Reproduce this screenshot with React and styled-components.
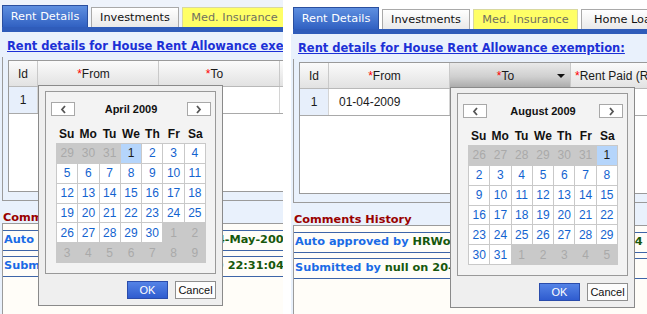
import React from "react";
import styled, { createGlobalStyle, css } from "styled-components";

const GlobalStyle = createGlobalStyle`
  html, body { margin: 0; padding: 0; background: #ffffff; overflow: hidden; }
  body { width: 647px; height: 314px; }
  * { box-sizing: border-box; }
`;

const Screen = styled.div`
  display: flex;
  gap: 8px;
  width: 647px;
  height: 314px;
  overflow: hidden;
  background: #ffffff;
`;

const Panel = styled.div`
  flex-shrink: 0;
  width: ${(p) => p.$w}px;
  height: 314px;
  overflow: hidden;
  padding-top: ${(p) => p.$top}px;
  background: ${(p) => p.$topBg};
  display: flex;
  flex-direction: column;
`;

const TabBar = styled.div`
  display: flex;
  align-items: flex-end;
  gap: 3px;
  height: 22px;
  padding-left: 2px;
  flex-shrink: 0;
`;

const Tab = styled.div`
  flex-shrink: 0;
  width: ${(p) => p.$w}px;
  height: 20px;
  display: flex;
  align-items: center;
  justify-content: center;
  font: 11.3px "DejaVu Sans", Verdana, sans-serif;
  color: #111;
  border: 1px solid #a9a9a9;
  border-bottom: none;
  background: linear-gradient(#ffffff, #e9e9e9);
  white-space: nowrap;
  ${(p) =>
    p.$kind === "active" &&
    css`
      height: 22px;
      color: #ffffff;
      border-color: #2a4f9f;
      background: linear-gradient(#5e8fe0, #3161c2);
    `}
  ${(p) =>
    p.$kind === "yellow" &&
    css`
      color: #707060;
      border-color: #d8d8a0;
      background: #ffff66;
    `}
`;

const Strip = styled.div`
  height: 5px;
  margin-left: 2px;
  background: #2f5cba;
  flex-shrink: 0;
`;

const Body = styled.div`
  flex: 1;
  display: flex;
  flex-direction: column;
  background: #e9f1fc;
  width: 480px;
`;

const Heading = styled.div`
  padding: 7px 0 0 7px;
  height: 22px;
  line-height: 16px;
  font: bold 11.5px "DejaVu Sans", Verdana, sans-serif;
  color: #1c30d6;
  text-decoration: underline;
  white-space: nowrap;
`;

const GridWrap = styled.div`
  margin: 3px 0 0 2px;
  padding: 3px 0 8px 5px;
  border-left: 1px solid #9b9b9b;
  border-bottom: 1px solid #9b9b9b;
`;

const Table = styled.div`
  width: 460px;
  height: 132px;
  border: 1px solid #9a9a9a;
  background: #ffffff;
  font: 11px "Liberation Sans", Arial, sans-serif;
  color: #1a1a1a;
`;

const Row = styled.div`
  display: grid;
  grid-template-columns: 29px 121px 121px 1fr;
  height: ${(p) => p.$h}px;
  border-bottom: 1px solid ${(p) => p.$line};
`;

const HeadCell = styled.div`
  position: relative;
  display: flex;
  align-items: center;
  justify-content: ${(p) => (p.$left ? "flex-start" : "center")};
  padding: ${(p) => (p.$left ? "0 0 0 4px" : `0 ${p.$pr || 0}px 0 0`)};
  border-right: 1px solid #c9c9c9;
  font-size: 12px;
  white-space: nowrap;
  background: linear-gradient(#fbfbfb, #e2e2e2);
  ${(p) =>
    p.$active &&
    css`
      background: linear-gradient(#e9e9e9 0%, #cfcfcf 55%, #a9a9a9 100%);
    `}
`;

const Star = styled.span`
  color: #ff0000;
`;

const DropArrow = styled.span`
  position: absolute;
  right: 5px;
  top: 11px;
  width: 0;
  height: 0;
  border-left: 4px solid transparent;
  border-right: 4px solid transparent;
  border-top: 4px solid #111;
`;

const Cell = styled.div`
  display: flex;
  align-items: center;
  justify-content: ${(p) => (p.$center ? "center" : "flex-start")};
  padding-left: ${(p) => (p.$center ? 0 : 10)}px;
  border-right: 1px solid #d4d4d4;
  background: ${(p) => (p.$tint ? "#e7effb" : "#ffffff")};
  font-size: 12px;
`;

const CommentsTitle = styled.div`
  padding: 10px 0 0 3px;
  height: 22px;
  line-height: 12px;
  font: bold 11.3px "DejaVu Sans", Verdana, sans-serif;
  color: #990000;
  white-space: nowrap;
`;

const CommentsBox = styled.div`
  flex: 1;
  margin-left: 2px;
  padding-top: 6px;
  border-left: 1px solid #9b9b9b;
  border-top: 1px solid #9b9b9b;
  background: #fffdf8;
`;

const Comment = styled.div`
  height: 21px;
  margin-bottom: 5px;
  padding-left: 1px;
  border-top: 1px solid #3e65a8;
  border-bottom: 1px solid #3e65a8;
  font: bold 11.3px "DejaVu Sans", Verdana, sans-serif;
  line-height: 18px;
  white-space: nowrap;
`;

const Label = styled.span`
  color: #1a6be6;
`;

const Value = styled.span`
  color: #17580c;
`;

/* ---------- calendar popup ---------- */

const Popup = styled.div`
  position: absolute;
  top: calc(100% - 1px);
  left: 0;
  z-index: 10;
  width: 185px;
  height: 221px;
  padding: 5px 6px 0 6px;
  border: 1px solid #8a8a8a;
  background: #efefef;
  font-family: "Liberation Sans", Arial, sans-serif;
  cursor: default;
`;

const CalBox = styled.div`
  height: 183px;
  border: 1px solid #999999;
  background: #f3f3f3;
  padding: 10px 4px 10px 5px;
`;

const NavRow = styled.div`
  display: flex;
  align-items: center;
  justify-content: space-between;
  height: 14px;
`;

const NavButton = styled.div`
  width: 24px;
  height: 14px;
  display: flex;
  align-items: center;
  justify-content: center;
  border: 1px solid #a8a8a8;
  background: #ffffff;
`;

const MonthTitle = styled.div`
  font-weight: bold;
  font-size: 11px;
  color: #111;
`;

const DayHeads = styled.div`
  display: grid;
  grid-template-columns: repeat(7, 1fr);
  width: 150px;
  height: 17px;
  margin: 9px 0 1px 5px;
  align-items: center;
  font-weight: bold;
  font-size: 12px;
  color: #111;
  text-align: center;
`;

const DayGrid = styled.div`
  display: grid;
  grid-template-columns: repeat(7, 1fr);
  grid-template-rows: repeat(6, 1fr);
  gap: 1px;
  padding: 1px;
  width: 150px;
  height: 120px;
  margin-left: 5px;
  background: #c9c9c9;
`;

const Day = styled.div`
  display: flex;
  align-items: center;
  justify-content: center;
  font-size: 12px;
  color: #1363cf;
  background: #ffffff;
  ${(p) =>
    p.$out &&
    css`
      color: #a9a9a9;
      background: #c9c9c9;
    `}
  ${(p) =>
    p.$sel &&
    css`
      color: #1a1a1a;
      background: #b5d5fb;
    `}
`;

const ButtonRow = styled.div`
  display: flex;
  justify-content: flex-end;
  gap: 7px;
  margin-top: 7px;
`;

const Button = styled.div`
  width: 41px;
  height: 18px;
  display: flex;
  align-items: center;
  justify-content: center;
  font-size: 11px;
  border: 1px solid #8f8f8f;
  background: #fdfdfd;
  color: #111;
  ${(p) =>
    p.$primary &&
    css`
      border-color: #2a4cab;
      background: linear-gradient(#5483e6, #2f5ccf);
      color: #ffffff;
    `}
`;

const Chevron = ({ dir }) => (
  <svg width="7" height="9" viewBox="0 0 7 9">
    <polyline
      points={dir === "left" ? "5,1 2,4.5 5,8" : "2,1 5,4.5 2,8"}
      fill="none"
      stroke="#555"
      strokeWidth="1.8"
    />
  </svg>
);

const MONTHS = [
  "January", "February", "March", "April", "May", "June",
  "July", "August", "September", "October", "November", "December",
];

function buildDays(year, month) {
  const first = new Date(year, month, 1).getDay();
  const dim = new Date(year, month + 1, 0).getDate();
  const prevDim = new Date(year, month, 0).getDate();
  const cells = [];
  for (let i = first - 1; i >= 0; i--) cells.push({ d: prevDim - i, out: true });
  for (let d = 1; d <= dim; d++) cells.push({ d, out: false, sel: d === 1 });
  let n = 1;
  while (cells.length < 42) cells.push({ d: n++, out: true });
  return cells;
}

function Calendar({ year, month }) {
  const days = buildDays(year, month);
  return (
    <Popup>
      <CalBox>
        <NavRow>
          <NavButton>
            <Chevron dir="left" />
          </NavButton>
          <MonthTitle>
            {MONTHS[month]} {year}
          </MonthTitle>
          <NavButton>
            <Chevron dir="right" />
          </NavButton>
        </NavRow>
        <DayHeads>
          {["Su", "Mo", "Tu", "We", "Th", "Fr", "Sa"].map((d) => (
            <span key={d}>{d}</span>
          ))}
        </DayHeads>
        <DayGrid>
          {days.map((c, i) => (
            <Day key={i} $out={c.out} $sel={c.sel}>
              {c.d}
            </Day>
          ))}
        </DayGrid>
      </CalBox>
      <ButtonRow>
        <Button $primary>OK</Button>
        <Button>Cancel</Button>
      </ButtonRow>
    </Popup>
  );
}

const TABS = [
  { label: "Rent Details", w: 86, kind: "active" },
  { label: "Investments", w: 88, kind: "plain" },
  { label: "Med. Insurance", w: 105, kind: "yellow" },
  { label: "Home Loan", w: 90, kind: "plain" },
];

function RentPanel({ w, top, topBg, openOn, year, month, fromValue }) {
  return (
    <Panel $w={w} $top={top} $topBg={topBg}>
      <TabBar>
        {TABS.map((t) => (
          <Tab key={t.label} $w={t.w} $kind={t.kind}>
            {t.label}
          </Tab>
        ))}
      </TabBar>
      <Strip />
      <Body>
        <Heading>Rent details for House Rent Allowance exemption:</Heading>
        <GridWrap>
          <Table>
            <Row $h={26} $line="#b9b9b9">
              <HeadCell>Id</HeadCell>
              <HeadCell $pr={9}>
                <Star>*</Star>From
                {openOn === "from" && <Calendar year={year} month={month} />}
              </HeadCell>
              <HeadCell $pr={9} $active={openOn === "to"}>
                <Star>*</Star>To
                {openOn === "to" && <DropArrow />}
                {openOn === "to" && <Calendar year={year} month={month} />}
              </HeadCell>
              <HeadCell $left>
                <Star>*</Star>Rent Paid (Rs.)
              </HeadCell>
            </Row>
            <Row $h={27} $line="#a9a9a9">
              <Cell $center $tint>
                1
              </Cell>
              <Cell>{fromValue}</Cell>
              <Cell />
              <Cell />
            </Row>
          </Table>
        </GridWrap>
        <CommentsTitle>Comments History</CommentsTitle>
        <CommentsBox>
          <Comment>
            <Label>Auto approved by </Label>
            <Value>HRWorker on 04-May-2009 22:31:04</Value>
          </Comment>
          <Comment>
            <Label>Submitted by </Label>
            <Value>null on 20-May-2009 22:31:04</Value>
          </Comment>
        </CommentsBox>
      </Body>
    </Panel>
  );
}

export default function App() {
  return (
    <>
      <GlobalStyle />
      <Screen>
        <RentPanel
          w={283}
          top={5}
          topBg="#eef3fb"
          openOn="from"
          year={2009}
          month={3}
          fromValue="01-04-2009"
        />
        <RentPanel
          w={356}
          top={7}
          topBg="#ffffff"
          openOn="to"
          year={2009}
          month={7}
          fromValue="01-04-2009"
        />
      </Screen>
    </>
  );
}
